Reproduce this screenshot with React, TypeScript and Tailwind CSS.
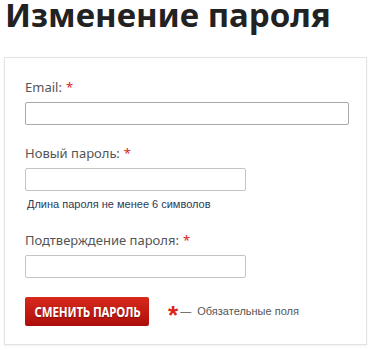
const Star = () => <span className="ml-1 text-[#d9261c]">*</span>;

export default function App() {
  return (
    <div className="w-[372px] h-[350px] bg-white overflow-hidden">
      <h1 className="-mt-[4px] pl-[5px] text-[33px] leading-[38px] font-bold text-[#222] font-['Noto_Sans',sans-serif]">
        Изменение пароля
      </h1>
      <div className="ml-[4px] mt-[23px] w-[363px] h-[288px] border border-[#e3e3e3] shadow-[0_1px_2px_rgba(0,0,0,0.06)] pl-[20px] pt-[20px]">
        <div className="font-['Noto_Sans',sans-serif] text-[13px] leading-[18px] text-[#555]">
          Email:<Star />
        </div>
        <input className="mt-[6px] block w-[324px] h-[23px] border border-[#a9a9a9] rounded-[2px] bg-white" />
        <div className="mt-[19px] font-['Noto_Sans',sans-serif] text-[13px] leading-[18px] text-[#555]">
          Новый пароль:<Star />
        </div>
        <input className="mt-[6px] block w-[221px] h-[23px] border border-[#c4c4c4] rounded-[2px] bg-white" />
        <div className="mt-[5px] pl-[2px] font-['Liberation_Sans',sans-serif] text-[11px] leading-[16px] text-[#2b3a55]">
          Длина пароля не менее 6 символов
        </div>
        <div className="mt-[19px] font-['Noto_Sans',sans-serif] text-[13px] leading-[18px] text-[#555]">
          Подтверждение пароля:<Star />
        </div>
        <input className="mt-[6px] block w-[221px] h-[23px] border border-[#c4c4c4] rounded-[2px] bg-white" />
        <div className="mt-[16px] flex items-center">
          <button className="w-[124px] h-[29px] rounded-[2px] bg-gradient-to-b from-[#d8291c] to-[#ad0c0a] text-white flex items-center justify-center">
            <span className="inline-block whitespace-nowrap font-bold text-[14px] font-['Noto_Sans',sans-serif] tracking-[-0.2px] scale-x-[0.82] [text-shadow:0_1px_1px_rgba(0,0,0,0.3)]">
              СМЕНИТЬ ПАРОЛЬ
            </span>
          </button>
          <span className="ml-[19px] text-[#d9261c] text-[26px] leading-none font-bold font-['Liberation_Sans',sans-serif] mt-[8px]">*</span>
          <span className="ml-[2px] font-['Liberation_Sans',sans-serif] text-[11px] text-[#555]">— &nbsp;Обязательные поля</span>
        </div>
      </div>
    </div>
  );
}
